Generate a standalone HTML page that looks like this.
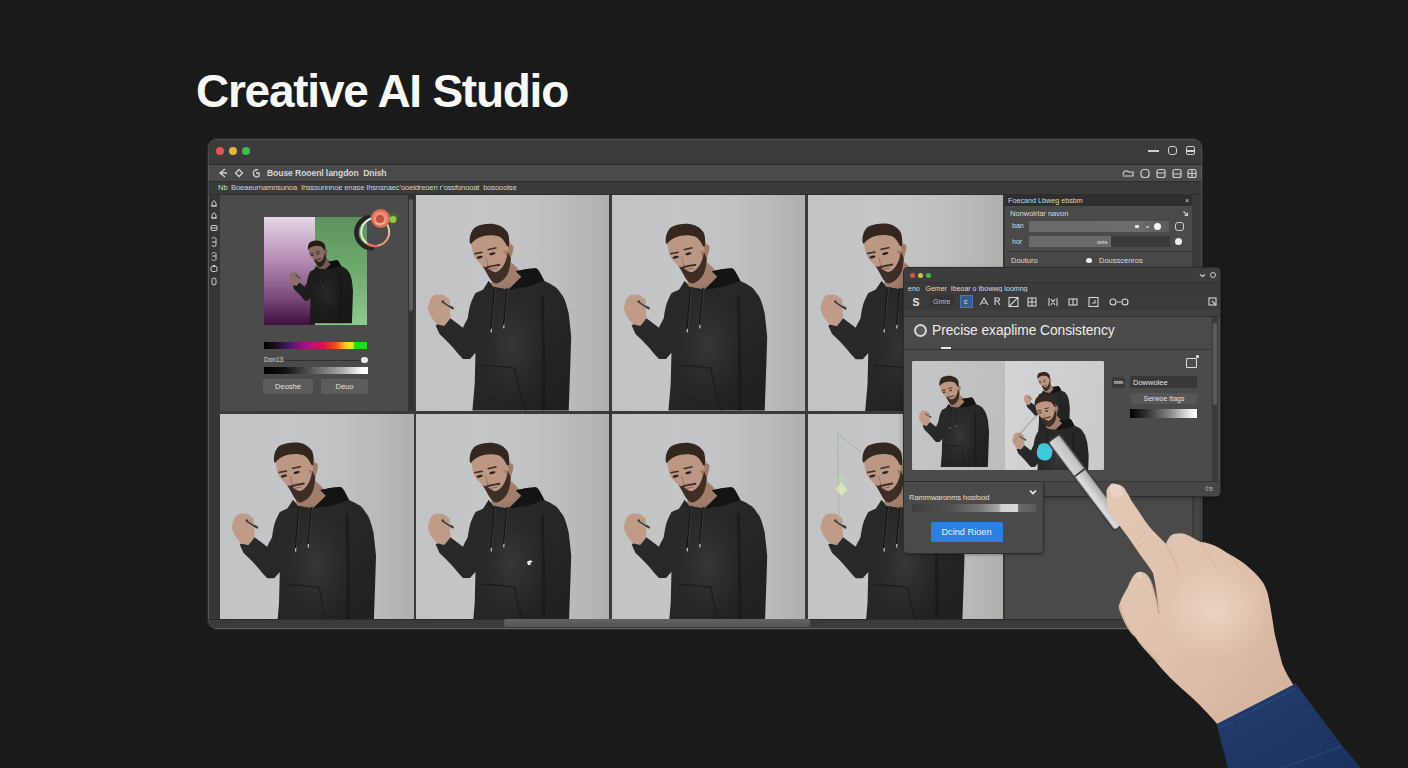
<!DOCTYPE html>
<html><head><meta charset="utf-8">
<style>
*{margin:0;padding:0;box-sizing:border-box}
html,body{width:1408px;height:768px;overflow:hidden;background:#1a1a1a;font-family:"Liberation Sans",sans-serif}
.a{position:absolute}
#title{left:196px;top:64px;font-size:46px;font-weight:bold;color:#f8f8f8;letter-spacing:-1.25px;white-space:nowrap}
#win{left:208px;top:139px;width:994px;height:490px;border-radius:9px;background:#3a3a3a;overflow:hidden;box-shadow:0 0 0 1px #2a2a2a}
.txt{color:#d8d8d8;white-space:nowrap;line-height:1}
.tile{overflow:hidden;background:linear-gradient(90deg,#c1c3c5 0%,#c4c6c7 35%,#bfc0c1 65%,#b6b7b6 88%,#afafac 100%)}
.tile svg{position:absolute;left:0;top:0}
</style></head><body>
<svg width="0" height="0" style="position:absolute">
<defs>
<linearGradient id="hood" x1="0" y1="0" x2="1" y2="1"><stop offset="0" stop-color="#2b2b2b"/><stop offset=".6" stop-color="#262626"/><stop offset="1" stop-color="#1e1e1e"/></linearGradient><radialGradient id="hoodhl"><stop offset="0" stop-color="#383838" stop-opacity=".95"/><stop offset=".6" stop-color="#2e2e2e" stop-opacity=".6"/><stop offset="1" stop-color="#2a2a2a" stop-opacity="0"/></radialGradient>
<symbol id="man" viewBox="0 0 194 216">
<path d="M74 90 L92 64 L101 72 L109 82 L94 98 L72 95 Z" fill="#a27e6a"/>
<path d="M59.8 98 C57 103 55 108 54.3 110.7 C53 116 52.5 120 52 123.3 C50 127 48.5 130 47.2 132.8 L34.6 123.3 L19.7 130.4 L23.6 139.1 C28 143 32 147 36.2 151.7 C40 156 44 161 47.2 164.3 L54.3 164.3 L59.8 158 L59 189.5 L56.7 216 L153.5 216 L155 173.7 L156 142.2 C155 130 154 124 153.5 118.6 C151 108 149 102 146 98.9 C143 94 140 91 137.5 90.3 C134 88 131 87 129 86 L126 80.2 C124 76 122 73 120.3 73 L111.7 73.8 L100.3 76 L106 81.7 L93 94.6 L77.4 91.7 L73 86 L67.3 94.6 Z" fill="url(#hood)"/>
<ellipse cx="96" cy="150" rx="38" ry="62" fill="url(#hoodhl)"/>
<path d="M100.3 76 L111.7 73.8 L120.3 73 C123 74 125 78 126 80.2 L129 86 L111.7 91.7 L93 94.6 L106 81.7 Z" fill="#141414"/>
<path d="M73 86 L77.4 91.7 L93 94.6 L84 97 L70 92 Z" fill="#252525"/>
<path d="M79.5 93 L75.6 136 M92 93 L88.2 132" stroke="#111" stroke-width="2" fill="none"/><path d="M80 93 L76.3 135 M92.5 93 L88.9 131" stroke="#4a4a4a" stroke-width=".8" fill="none"/>
<path d="M75.8 134 L75.6 137.5 M88.4 130 L88.2 133.5" stroke="#ccc" stroke-width="1.2"/>
<path d="M66 170.6 C78 171 90 172 99.2 173.7 C101 182 102 190 104 195.8 C106 203 108 210 110.2 216" stroke="#1c1c1c" stroke-width="1.3" fill="none"/>
<path d="M127 100 C128 140 129 180 128 216" stroke="#161616" stroke-width="3" fill="none" opacity=".6"/>
<path d="M55 46 C56 52 57 56 58 60.2 C60 64 62 66 64 68 C67 71 69 74 71 77 C73 81 76 86 80.5 88 C86 86 90 82 93 76 C94.5 72 95 68 95.3 64.5 L96.7 58 C98.5 55 98.5 51 96 50.5 L92 42 C88 38 80 37 74 38 C66 38 60 40 55 46 Z" fill="#bc9884"/>
<path d="M88 56 C91 60 92 64 92 68 C91 72 89 76 86 80 L92 78 C94 72 95.3 68 95.3 64 L95 56 Z" fill="#a27c68"/>
<path d="M92 50 C95.5 48 99 49.5 97.6 53.5 C97 57 96.5 59.5 95 62 Z" fill="#a27b66"/>
<path d="M67 71 C70 75 72 80 74.5 84 C76.5 87 78.5 88.5 80.5 88.5 C85 87.5 89 84 92 79 C94 75 95 69 95.2 63 L92.5 57 C91.5 62 90 67 87.5 71 C85 74.5 82.5 76.5 80 77 C77 76.5 74.5 75 72.5 73 C70.5 72 68.5 71.5 67 71 Z" fill="#3e2e25"/>
<path d="M70.5 72.5 C74 71 79 70.5 84.5 69.5" stroke="#3e2f26" stroke-width="2" fill="none"/>
<path d="M73.5 74.5 C76 74 79 73.5 81.5 73" stroke="#8a5f52" stroke-width="1" fill="none"/>
<path d="M54 47 C53.5 40 56 34 60 31.5 C65 29 72 28 78 28.5 C84 29.5 89 32 92 37 C93.5 40 94 45 93.5 51 L91.5 51 C89.5 47 87 43 84 41.5 C79 39.5 73 39.5 67 41 C62 42.5 58 45 55 49 Z" fill="#33271f"/>
<ellipse cx="64" cy="62" rx="3.2" ry="1.3" transform="rotate(-12 64 62)" fill="#2e221c"/><ellipse cx="76.8" cy="58.5" rx="3.2" ry="1.3" transform="rotate(-12 76.8 58.5)" fill="#2e221c"/>
<path d="M58.5 58.5 L67 57 M72 54.5 L81 52.5" stroke="#3a2c24" stroke-width="1.7" fill="none"/>
<path d="M70 62 C71 65 72 68 72 70.5 L75 70" stroke="#9a7462" stroke-width="1" fill="none"/>
<path d="M11.8 113.9 C12.5 110 13.5 107 14.2 104.4 C16 102 17.5 100.5 18.9 99.7 L26.8 99.7 C29.5 101 32 103 33.9 104.4 L34.6 123.3 C32.5 126 30.5 129 28.3 131.2 C25.5 130.5 23 130 20.5 128.9 C18 126 16 123 14.2 120.2 Z" fill="#c09c88"/>
<path d="M26 106 L37.8 113.9" stroke="#3a3a3a" stroke-width="2.4"/>
<path d="M28 106.5 L35 111" stroke="#d8d8d8" stroke-width="0.8"/>
<path d="M37.8 113.9 L45 118.5" stroke="#c8c0b0" stroke-width="1.3"/>
</symbol>
</defs>
</svg>

<div id="title" class="a">Creative AI Studio</div>

<div id="win" class="a">
  <!-- title bar -->
  <div class="a" style="left:0;top:0;width:994px;height:26px;background:#3b3b3b;border-bottom:1px solid #2c2c2c"></div>
  <div class="a" style="left:7.5px;top:7.5px;width:8px;height:8px;border-radius:50%;background:#e0574f"></div>
  <div class="a" style="left:20.5px;top:7.5px;width:8px;height:8px;border-radius:50%;background:#e2b83c"></div>
  <div class="a" style="left:33.5px;top:7.5px;width:8px;height:8px;border-radius:50%;background:#40bd48"></div>
  <div class="a" style="left:940px;top:11px;width:11px;height:2px;background:#cfcfcf"></div>
  <div class="a" style="left:960px;top:7px;width:9px;height:9px;border:1.5px solid #d0d0d0;border-radius:3px"></div>
  <div class="a" style="left:978px;top:7px;width:9px;height:9px;border:1.5px solid #d0d0d0;border-radius:2px"></div>
  <div class="a" style="left:978px;top:11px;width:9px;height:1.5px;background:#d0d0d0"></div>
  <!-- nav row -->
  <div class="a" style="left:0;top:26px;width:994px;height:16px;background:#4a4a4a"></div>
  <svg class="a" style="left:8px;top:28px" width="50" height="12" viewBox="0 0 50 12">
    <path d="M9 2 L4 6 L9 10 M4 6 L11 6" stroke="#d0d0d0" stroke-width="1.3" fill="none"/>
    <path d="M23 2.5 L26.5 6 L23 9.5 L19.5 6 Z" stroke="#d0d0d0" stroke-width="1.3" fill="none"/>
    <path d="M42 3 A3.5 3.5 0 1 0 43 9 L43 6 L40 6" stroke="#d0d0d0" stroke-width="1.3" fill="none"/>
  </svg>
  <div class="a txt" style="left:59px;top:30px;font-size:8.6px;font-weight:bold;color:#d6d6d6;letter-spacing:-0.1px">Bouse Rooenl langdon&nbsp; Dnish</div>
  <svg class="a" style="left:912px;top:28px" width="82" height="12" viewBox="0 0 82 12">
    <g stroke="#d0d0d0" stroke-width="1.2" fill="none">
    <path d="M3 8 C3 4 6 3 9 5 L13 5 L13 9 L3 9"/>
    <rect x="21" y="2.5" width="8" height="8" rx="3"/>
    <rect x="37" y="2.5" width="8" height="8" rx="2"/><path d="M37 6 L45 6"/>
    <rect x="53" y="2.5" width="8" height="8" rx="2"/><path d="M53 7 L61 7"/>
    <rect x="68" y="2.5" width="8" height="8" rx="2"/><path d="M72 2.5 L72 10.5 M68 6.5 L76 6.5"/>
    </g>
  </svg>
  <!-- row 2 -->
  <div class="a" style="left:0;top:42px;width:994px;height:14px;background:#3a3a3a;border-top:1px solid #2e2e2e;border-bottom:1px solid #2e2e2e"></div>
  <div class="a txt" style="left:10px;top:45px;font-size:7.5px;color:#d8d8d8">Nb</div>
  <div class="a txt" style="left:23px;top:45px;font-size:7.6px;color:#d4d4d4;letter-spacing:-0.15px">Boeaeurnamnsunoa&nbsp; Ihsssunnnoe enase Ihsnsnaec&rsquo;ooeldreoen r&rsquo;ossfonooat &nbsp;bosooolse</div>
  <!-- left strip -->
  <div class="a" style="left:0;top:56px;width:12px;height:424px;background:#363636"></div>
  <div class="a" style="left:0;top:56px;width:1px;height:424px;background:#4a4a4a"></div>
  <svg class="a" style="left:1px;top:58px" width="11" height="92" viewBox="0 0 11 92">
    <g stroke="#cfcfcf" stroke-width="1" fill="none">
    <path d="M3 9 L3 6 L5 3.5 L7 6 L7 9 Z M2 9 L8 9"/>
    <path d="M3 21 L3 18 L5 15.5 L7 18 L7 21 Z M2 21 L8 21"/>
    <rect x="2" y="28.5" width="6" height="5" rx="1"/><path d="M2 31 L8 31"/>
    <path d="M3 42 C3 40 7 40 7 42 L7 48 C7 50 3 50 3 48 M3 45 L7 45"/>
    <path d="M3 57 C3 55 7 55 7 57 L7 62 C7 64 3 64 3 62 M3 59 L7 59"/>
    <rect x="2" y="69.5" width="6" height="5" rx="1.5"/><path d="M4 69.5 L4 68.5 L6 68.5 L6 69.5"/>
    <rect x="3" y="81" width="4" height="7" rx="2"/>
    </g>
  </svg>
  <!-- color panel -->
  <div class="a" style="left:12px;top:56px;width:188px;height:216px;background:#4b4b4b"></div>
  <div class="a" style="left:200px;top:56px;width:6px;height:216px;background:#333333"></div>
  <div class="a" style="left:201px;top:60px;width:4px;height:112px;background:#5e5e5e;border-radius:2px"></div>
  <!-- thumbnail -->
  <div class="a" style="left:56px;top:78px;width:103px;height:108px;overflow:hidden">
    <div class="a" style="left:0;top:0;width:51px;height:108px;background:linear-gradient(180deg,#e6d8e6 0%,#b48cb4 40%,#7a4a7a 75%,#3c0f3c 100%)"></div>
    <div class="a" style="left:51px;top:0;width:52px;height:108px;background:linear-gradient(180deg,#5e925e 0%,#6faa6f 50%,#8dca8d 100%)"></div>
    <svg class="a" style="left:19.8px;top:11.3px;filter:brightness(.72)" width="85.8" height="95.6" viewBox="0 0 194 216"><use href="#man"/></svg>
  </div>
  <svg class="a" style="left:140px;top:62px" width="60" height="50" viewBox="0 0 60 50">
    <defs><linearGradient id="rg" x1="0" y1="0" x2="1" y2="1"><stop offset="0" stop-color="#f4f4f4"/><stop offset=".5" stop-color="#efe0c0"/><stop offset=".8" stop-color="#e8b890"/><stop offset="1" stop-color="#d86050"/></linearGradient></defs>
    <path d="M22 16 A15.5 15.5 0 0 0 26 47" stroke="#242424" stroke-width="4.5" fill="none"/>
    <circle cx="27.2" cy="31" r="14" stroke="url(#rg)" stroke-width="2" fill="none"/>
    <path d="M19 43 A14 14 0 0 0 30 44.7" stroke="#d86a58" stroke-width="2.2" fill="none"/>
    <circle cx="45.5" cy="16" r="4" fill="#4a7a30" opacity=".6"/>
    <circle cx="45" cy="18.5" r="3.5" fill="#92c848"/>
    <circle cx="32.6" cy="17.4" r="9.5" fill="#e0704e"/>
    <circle cx="32.6" cy="17.4" r="7" fill="#f08c80"/>
    <circle cx="32" cy="18" r="4" fill="#c05040"/>
    <path d="M27 21 C29 24 34 24 37 21" stroke="#f0b890" stroke-width="1.5" fill="none"/>
  </svg>
  <div class="a" style="left:56px;top:203px;width:103px;height:7px;background:linear-gradient(90deg,#000 0%,#1a0a1a 10%,#4a1a6a 25%,#b0108a 42%,#e0104a 58%,#f05020 70%,#f8d020 80%,#e8f010 86%,#20e020 88%,#18e018 100%)"></div>
  <div class="a txt" style="left:56px;top:218px;font-size:6.5px;color:#d8d8d8">Don13</div>
  <div class="a" style="left:77px;top:221px;width:78px;height:1px;background:#2f2f2f"></div>
  <div class="a" style="left:153px;top:218px;width:7px;height:6px;border-radius:3px;background:#eaeaea"></div>
  <div class="a" style="left:56px;top:228px;width:104px;height:7px;background:linear-gradient(90deg,#000 0%,#111 20%,#555 45%,#aaa 75%,#fff 95%,#fff 100%)"></div>
  <div class="a" style="left:55px;top:240px;width:50px;height:15px;border-radius:2px;background:#5c5c5c"></div>
  <div class="a txt" style="left:55px;top:244px;width:50px;text-align:center;font-size:7.5px;color:#e0e0e0">Deoshe</div>
  <div class="a" style="left:113px;top:240px;width:47px;height:15px;border-radius:2px;background:#5c5c5c"></div>
  <div class="a txt" style="left:113px;top:244px;width:47px;text-align:center;font-size:7.5px;color:#e0e0e0">Deuo</div>
  <!-- tile row 1 -->
  <div class="a tile" style="left:208px;top:56px;width:193px;height:216px"><svg width="193" height="216"><use href="#man"/></svg></div>
  <div class="a tile" style="left:404px;top:56px;width:193px;height:216px"><svg width="193" height="216"><use href="#man"/></svg></div>
  <div class="a tile" style="left:600px;top:56px;width:195px;height:216px"><svg width="195" height="216"><use href="#man"/></svg></div>
  <!-- tile row 2 -->
  <div class="a tile" style="left:12px;top:275px;width:194px;height:205px"><svg width="194" height="216"><use href="#man"/></svg></div>
  <div class="a tile" style="left:208px;top:275px;width:193px;height:205px"><svg width="193" height="216"><use href="#man"/><path d="M111 148 C113 146 116 146 116.5 148 L114 149 L115 151 L112 151 Z" fill="#f0f0f0"/></svg></div>
  <div class="a tile" style="left:404px;top:275px;width:193px;height:205px"><svg width="193" height="216"><use href="#man"/></svg></div>
  <div class="a tile" style="left:600px;top:275px;width:195px;height:205px"><svg width="195" height="216"><use href="#man"/><path d="M29.5 19.7 L31 105 M29.5 19.7 L54 39" stroke="#9ab8a0" stroke-width=".8" fill="none"/><path d="M33.6 68 L39.5 75.4 L33.6 82 L27.5 75.4 Z" fill="#d8e8b8" opacity=".9"/><path d="M33 60 L37 66 L33 70 L29 66 Z" fill="#b8e0a0" opacity=".6"/></svg></div>
  <!-- right panel -->
  <div class="a" style="left:795px;top:56px;width:189px;height:424px;background:#4b4b4b"></div>
  <div class="a" style="left:795px;top:56px;width:2px;height:424px;background:#353535"></div>
  <div class="a" style="left:984px;top:56px;width:10px;height:424px;background:#3a3a3a"></div>
  <div class="a" style="left:797px;top:56px;width:187px;height:11px;background:#2e2e2e"></div>
  <div class="a txt" style="left:800px;top:58px;font-size:7.2px;color:#d8d8d8">Foecand Lbweg ebsbm</div>
  <div class="a txt" style="left:977px;top:58px;font-size:7px;color:#d8d8d8">&#215;</div>
  <div class="a" style="left:798px;top:68px;width:186px;height:45px;background:#4a4a4a;border-bottom:1px solid #333"></div>
  <div class="a txt" style="left:802px;top:71px;font-size:7.5px;color:#dcdcdc">Nonwoirlar navon</div>
  <svg class="a" style="left:974px;top:71px" width="7" height="7" viewBox="0 0 7 7"><path d="M1.5 1.5 L5.5 5.5 M5.5 2.5 L5.5 5.5 L2.5 5.5" stroke="#d0d0d0" stroke-width="1.1" fill="none"/></svg>
  <div class="a txt" style="left:804px;top:83px;font-size:7px;color:#d8d8d8">ban</div>
  <div class="a" style="left:821px;top:82px;width:140px;height:11px;background:linear-gradient(90deg,#6a6a6a 0%,#6c6c6c 80%,#5a5a5a 100%)"></div>
  <div class="a" style="left:927px;top:86px;width:4px;height:3px;background:#e8e8e8;border-radius:1px"></div>
  <div class="a" style="left:938px;top:87px;width:3px;height:2px;background:#aaa"></div>
  <div class="a" style="left:946px;top:84px;width:7px;height:7px;background:#f4f4f4;border-radius:50%"></div>
  <div class="a" style="left:967px;top:83px;width:9px;height:9px;border:1.2px solid #d0d0d0;border-radius:3px"></div>
  <div class="a txt" style="left:804px;top:99px;font-size:7px;color:#d8d8d8">hor</div>
  <div class="a" style="left:821px;top:97px;width:141px;height:11px;background:#3a3a3a"></div>
  <div class="a" style="left:821px;top:97px;width:82px;height:11px;background:#6a6a6a"></div>
  <div class="a txt" style="left:889px;top:99.5px;font-size:6px;font-weight:bold;color:#cfcfcf">ons</div>
  <div class="a" style="left:967px;top:99px;width:7px;height:7px;background:#f0f0f0;border-radius:50%"></div>
  <div class="a" style="left:798px;top:114px;width:186px;height:15px;background:#484848"></div>
  <div class="a txt" style="left:803px;top:118px;font-size:7.5px;color:#dcdcdc">Douturo</div>
  <div class="a" style="left:878px;top:119px;width:6px;height:5px;background:#f0f0f0;border-radius:50%"></div>
  <div class="a txt" style="left:891px;top:118px;font-size:7.5px;color:#dcdcdc">Dousscenros</div>
  <!-- lower right box -->
  <div class="a" style="left:835px;top:357px;width:149px;height:123px;background:#4a4a4a;border-top:1px solid #5a5a5a;border-left:1px solid #5a5a5a;border-radius:4px 0 0 0"></div>
  <div class="a" style="left:797px;top:414px;width:40px;height:66px;background:#4a4a4a"></div>
  <div class="a" style="left:986px;top:140px;width:6px;height:340px;background:#444"></div>
  <!-- bottom bar -->
  <div class="a" style="left:0;top:480px;width:994px;height:10px;background:#3b3b3b;border-top:1px solid #2a2a2a;border-bottom:1px solid #4e4e4e"></div>
  <div class="a" style="left:296px;top:480px;width:306px;height:8px;background:linear-gradient(180deg,#626262,#545454);border-radius:2px"></div>
  <div class="a" style="left:0;top:0;width:994px;height:490px;border-radius:9px;border:1px solid rgba(255,255,255,.09);pointer-events:none"></div>
</div>

<!-- floating panel -->
<div id="fp" class="a" style="left:904px;top:268px;width:316px;height:228px;border-radius:4px;background:#4b4b4b;overflow:hidden;box-shadow:0 0 0 1px #2b2b2b, 0 2px 6px rgba(0,0,0,.35)">
  <div class="a" style="left:0;top:0;width:316px;height:15px;background:#3d3d3d;border-bottom:1px solid #333"></div>
  <div class="a" style="left:6px;top:5px;width:5px;height:5px;border-radius:50%;background:#d9574e"></div>
  <div class="a" style="left:14px;top:5px;width:5px;height:5px;border-radius:50%;background:#d8c040"></div>
  <div class="a" style="left:22px;top:5px;width:5px;height:5px;border-radius:50%;background:#40b848"></div>
  <svg class="a" style="left:295px;top:5px" width="7" height="5" viewBox="0 0 7 5"><path d="M1 1.5 L3.5 3.5 L6 1.5" stroke="#ccc" stroke-width="1.2" fill="none"/></svg>
  <div class="a" style="left:306px;top:4px;width:6px;height:6px;border:1.3px solid #ccc;border-radius:50%"></div>
  <div class="a" style="left:0;top:15px;width:316px;height:9px;background:#3a3a3a"></div>
  <div class="a txt" style="left:4px;top:16.5px;font-size:7px;color:#dedede">eno &nbsp;&nbsp;Gemer&nbsp; Ibeoar o Ibowwg Ioomng</div>
  <div class="a" style="left:0;top:24px;width:316px;height:18px;background:#3b3b3b"></div>
  <div class="a" style="left:26px;top:27px;width:25px;height:11px;border-radius:3px;background:#353535"></div>
  <div class="a txt" style="left:8.5px;top:28.5px;font-size:10.5px;font-weight:bold;color:#e4e4e4">S</div>
  <div class="a txt" style="left:29px;top:30px;font-size:7px;color:#bdbdbd">Gmre</div>
  <div class="a" style="left:56px;top:27px;width:13px;height:13px;border:1.5px solid #4a78b8;background:#3a5a8a"></div>
  <div class="a txt" style="left:60px;top:30px;font-size:7px;color:#e8e8e8">c</div>
  <svg class="a" style="left:74px;top:27px" width="240" height="13" viewBox="0 0 240 13">
    <g stroke="#d6d6d6" stroke-width="1.1" fill="none">
    <path d="M2 10 L6 3 L10 10 M4 8 L8 8"/>
    <path d="M17 10 L17 3 L20 3 C22 3 22 6 20 6 L17 6 M19.5 6 L22 10"/>
    <rect x="31" y="2.5" width="9" height="9"/><path d="M31 11.5 L40 2.5"/>
    <rect x="50" y="3" width="8" height="8"/><path d="M50 7 L58 7 M54 3 L54 11"/>
    <path d="M71 3 L71 11 M79 3 L79 11 M73 4 L77 10 M77 4 L73 10"/>
    <rect x="91" y="4" width="8" height="6"/><path d="M95 4 L95 10"/>
    <rect x="111" y="2.5" width="9" height="9"/><path d="M114 8 L117 8 L117 5"/>
    <circle cx="135" cy="7" r="3"/><path d="M139 7 L143 7"/><circle cx="147" cy="7" r="3"/>
    <rect x="231" y="3" width="7" height="7"/><path d="M234 6 L238 10"/>
    </g>
  </svg>
  <div class="a" style="left:0;top:42px;width:316px;height:6px;background:#404040"></div>
  <div class="a" style="left:0;top:48px;width:316px;height:1px;background:#303030"></div>
  <div class="a" style="left:0;top:49px;width:308px;height:32px;background:#4a4a4a"></div>
  <div class="a" style="left:10px;top:56px;width:13px;height:13px;border-radius:50%;border:2.5px solid #d8d8d8;background:#5a5a5a"></div>
  <div class="a txt" style="left:28px;top:56px;font-size:13.8px;color:#ededed;letter-spacing:-0.05px">Precise exaplime Consistency</div>
  <div class="a" style="left:37px;top:79px;width:10px;height:2px;background:#e8e8e8"></div>
  <div class="a" style="left:0;top:81px;width:308px;height:1px;background:#333"></div>
  <!-- scrollbar -->
  <div class="a" style="left:308px;top:49px;width:6px;height:164px;background:#3a3a3a"></div>
  <div class="a" style="left:309px;top:55px;width:4px;height:82px;background:#5c5c5c;border-radius:2px"></div>
  <!-- preview -->
  <div class="a" style="left:8px;top:93px;width:192px;height:109px;overflow:hidden;border-radius:2px;background:#c2c4c6">
    <div class="a" style="left:0;top:0;width:93px;height:109px;background:linear-gradient(100deg,#c4c6c7,#bcbebe)"></div>
    <div class="a" style="left:93px;top:0;width:99px;height:109px;background:linear-gradient(100deg,#d2d4d5,#c8cacb)"></div>
    <svg class="a" style="left:1px;top:1px" width="94.6" height="105.3" viewBox="0 0 194 216"><use href="#man"/></svg>
    <svg class="a" style="left:108px;top:2px" width="62" height="69" viewBox="0 0 194 216"><use href="#man"/></svg>
    <svg class="a" style="left:93.7px;top:18.8px" width="102.8" height="114.5" viewBox="0 0 194 216"><use href="#man"/></svg>
    <svg class="a" style="left:0;top:0" width="192" height="109"><path d="M102 81 C110 70 118 60 128 52" stroke="#9a9070" stroke-width="1" fill="none"/></svg>
  </div>
  <div class="a" style="left:282px;top:90px;width:11px;height:10px;border:1.6px solid #e0e0e0;border-radius:1px"></div>
  <div class="a" style="left:291.5px;top:87px;width:3px;height:3px;background:#eee;border-radius:50%"></div>
  <div class="a" style="left:208px;top:109px;width:13px;height:11px;background:#3a3a3a;border-radius:2px"></div>
  <div class="a txt" style="left:210px;top:112px;font-size:5px;font-weight:bold;color:#ddd">mm</div>
  <div class="a" style="left:226px;top:108px;width:67px;height:12px;background:#383838"></div>
  <div class="a txt" style="left:229px;top:110.5px;font-size:7.5px;color:#e0e0e0">Dowwolee</div>
  <div class="a" style="left:227px;top:125px;width:66px;height:11px;background:#565656"></div>
  <div class="a txt" style="left:227px;top:127px;width:66px;text-align:center;font-size:7px;color:#e0e0e0">Serwoe ttags</div>
  <div class="a" style="left:226px;top:140.5px;width:67px;height:9px;background:linear-gradient(90deg,#000 0%,#333 25%,#888 60%,#eee 90%,#fff 100%)"></div>
  <!-- bottom bar -->
  <div class="a" style="left:0;top:213px;width:316px;height:15px;background:#464646;border-top:1px solid #353535"></div>
  <div class="a txt" style="left:301px;top:218px;font-size:6px;color:#ccc">&#169;5</div>
</div>
<!-- sub panel -->
<div class="a" style="left:904px;top:482px;width:139px;height:71px;background:#4a4a4a;border-radius:0 0 4px 4px;box-shadow:0 0 0 1px #2e2e2e, 1px 2px 3px rgba(0,0,0,.3)">
  <div class="a txt" style="left:5px;top:12px;font-size:7.6px;color:#e0e0e0;letter-spacing:-0.1px">Rammwaronms hosfood</div>
  <svg class="a" style="left:125px;top:7px" width="8" height="6" viewBox="0 0 8 6"><path d="M1 1.5 L4 4.5 L7 1.5" stroke="#eee" stroke-width="1.6" fill="none"/></svg>
  <div class="a" style="left:8px;top:22px;width:124px;height:8px;background:linear-gradient(90deg,#3e3e3e 0%,#505050 30%,#777 55%,#aaa 70%,#d0d0d0 72%,#d8d8d8 85%,#6a6a6a 86%,#5a5a5a 100%)"></div>
  <div class="a" style="left:26.5px;top:40px;width:72px;height:20px;background:#2d7fe2;border-radius:1.5px"></div>
  <div class="a txt" style="left:26.5px;top:45.5px;width:72px;text-align:center;font-size:9.2px;color:#e8f2ff">Dcind Rioen</div>
</div>
<!-- stylus + hand -->
<svg class="a" style="left:0;top:0;pointer-events:none" width="1408" height="768" viewBox="0 0 1408 768">
  <defs>
    <linearGradient id="skin" x1="0" y1="0" x2="1" y2="1">
      <stop offset="0" stop-color="#e4c8b4"/><stop offset=".5" stop-color="#dfc1ac"/><stop offset="1" stop-color="#d3b09b"/>
    </linearGradient>
    <linearGradient id="cuff" x1="0" y1="0" x2="1" y2="1">
      <stop offset="0" stop-color="#223c6c"/><stop offset="1" stop-color="#1b325e"/>
    </linearGradient>
    <linearGradient id="pen" x1="0" y1="0" x2="1" y2="0">
      <stop offset="0" stop-color="#9a9a9a"/><stop offset=".15" stop-color="#e0e0e0"/><stop offset=".55" stop-color="#c8c8c8"/><stop offset=".85" stop-color="#b8b8b8"/><stop offset="1" stop-color="#8a8a8a"/>
    </linearGradient>
  </defs>
  <path d="M1039 445 C1043 442 1050 443 1052 449 C1053.5 456 1050 461 1044 460.5 C1038 460 1036 455 1037 450 Z" fill="#3ec8d8"/>
  <g transform="translate(1055 440) rotate(-37)">
    <rect x="-8" y="-3" width="16" height="112" rx="3" fill="#3a3a3a"/>
    <rect x="-6.5" y="-1.5" width="13" height="109" rx="2.5" fill="url(#pen)"/>
    <rect x="-4.5" y="0" width="9" height="40" rx="1.5" fill="#c9c9c9" opacity=".6"/>
    <path d="M-6.5 41 L6.5 41" stroke="#3a3a3a" stroke-width="1.8"/>
  </g>
  <path d="M1113.75 484 C1119 484 1123 486 1124.7 488.75 C1127 493 1130 497 1131 500 C1136 507 1141 515 1145.8 522 C1150 528 1155 533 1158.6 536.5 C1162 540 1164 542 1166 543.7 C1168 538 1171 534 1175 533.7 C1179 533 1182 533 1184 533.7 C1189 535 1195 539 1200.5 542 C1204 542 1207 543 1209.6 543.7 C1216 546 1222 549 1228 553.4 C1233 556 1238 559 1243.5 563 C1251 569 1258 575 1263 582.5 C1266 588 1268 593 1268.7 598 C1271 610 1273 622 1274.5 633 C1277 644 1280 655 1282.3 664 C1285 671 1290 680 1298 692 L1218 725 C1207 712 1198 703 1189 695 C1176 684 1164 672 1154.3 660 C1147 652 1140 645 1135 636.8 C1130 633 1126 626 1122 616.7 C1119 610 1118 606 1119.4 604 C1122 597 1125 592 1127.6 587.5 C1131 580 1134 573 1138.5 572 C1143 571 1147 574 1149.5 578 C1152 583 1154 589 1155 594.8 C1157 600 1158 605 1158.6 609 C1157 598 1156 585 1153 573 C1150 568 1147 564 1144 560 C1138 552 1133 544 1127.6 536.5 C1121 528 1115 519 1109 511 C1107 506 1106 497 1106.7 490 C1108 487 1110 484 1113.75 484 Z" fill="url(#skin)"/>
  <defs><clipPath id="handclip"><path d="M1113.75 484 C1119 484 1123 486 1124.7 488.75 C1127 493 1130 497 1131 500 C1136 507 1141 515 1145.8 522 C1150 528 1155 533 1158.6 536.5 C1162 540 1164 542 1166 543.7 C1168 538 1171 534 1175 533.7 C1179 533 1182 533 1184 533.7 C1189 535 1195 539 1200.5 542 C1204 542 1207 543 1209.6 543.7 C1216 546 1222 549 1228 553.4 C1233 556 1238 559 1243.5 563 C1251 569 1258 575 1263 582.5 C1266 588 1268 593 1268.7 598 C1271 610 1273 622 1274.5 633 C1277 644 1280 655 1282.3 664 C1285 671 1290 680 1298 692 L1218 725 C1207 712 1198 703 1189 695 C1176 684 1164 672 1154.3 660 C1147 652 1140 645 1135 636.8 C1130 633 1126 626 1122 616.7 C1119 610 1118 606 1119.4 604 C1122 597 1125 592 1127.6 587.5 C1131 580 1134 573 1138.5 572 C1143 571 1147 574 1149.5 578 C1152 583 1154 589 1155 594.8 C1157 600 1158 605 1158.6 609 C1157 598 1156 585 1153 573 C1150 568 1147 564 1144 560 C1138 552 1133 544 1127.6 536.5 C1121 528 1115 519 1109 511 C1107 506 1106 497 1106.7 490 C1108 487 1110 484 1113.75 484 Z"/></clipPath>
  <radialGradient id="handhl"><stop offset="0" stop-color="#ecd6c4" stop-opacity=".9"/><stop offset="1" stop-color="#ecd6c4" stop-opacity="0"/></radialGradient>
  <linearGradient id="handsh" x1="0" y1="0" x2="1" y2="0"><stop offset="0" stop-color="#b88f78" stop-opacity=".7"/><stop offset="1" stop-color="#b88f78" stop-opacity="0"/></linearGradient></defs>
  <g clip-path="url(#handclip)">
    <ellipse cx="1215" cy="610" rx="55" ry="50" fill="url(#handhl)"/>
    <path d="M1110 640 L1200 720 L1150 740 L1100 660 Z" fill="#b88f78" opacity=".35"/>
    <path d="M1119 600 C1122 620 1135 640 1160 662 L1140 670 L1110 620 Z" fill="#b88f78" opacity=".35"/>
  </g>
  <ellipse cx="1116" cy="490.5" rx="8" ry="5.5" transform="rotate(45 1116 490.5)" fill="#e9d3c6"/>
  <ellipse cx="1139" cy="575.5" rx="3.5" ry="2.5" transform="rotate(60 1139 575.5)" fill="#e6cfc2"/>
  <path d="M1150 579 C1154 588 1157 600 1159 614" stroke="#b8927c" stroke-width="1.3" fill="none" opacity=".7"/>
  <path d="M1136 541 C1140 538 1144 534 1146 530 M1139 546 C1143 543 1147 539 1149 535" stroke="#c9a590" stroke-width="0.8" fill="none" opacity=".6"/>
  <path d="M1166 544 C1172 554 1176 562 1178 570" stroke="#c8a088" stroke-width="1.1" fill="none" opacity=".5"/>
  <path d="M1200 542 C1207 552 1212 560 1215 568 M1228 553 C1236 562 1241 570 1244 578" stroke="#c8a088" stroke-width="1" fill="none" opacity=".4"/>
  <path d="M1216.6 724 L1295.6 683.6 L1340 743 L1361 768 L1228 768 C1224 752 1220 738 1216.6 724 Z" fill="url(#cuff)"/>
  <path d="M1219 728 L1296 688.5" stroke="#2e4b82" stroke-width="1.4" opacity=".8"/>
  <path d="M1282 768 L1342 746" stroke="#2b477a" stroke-width="1.4" opacity=".8"/>
</svg>
</body></html>
